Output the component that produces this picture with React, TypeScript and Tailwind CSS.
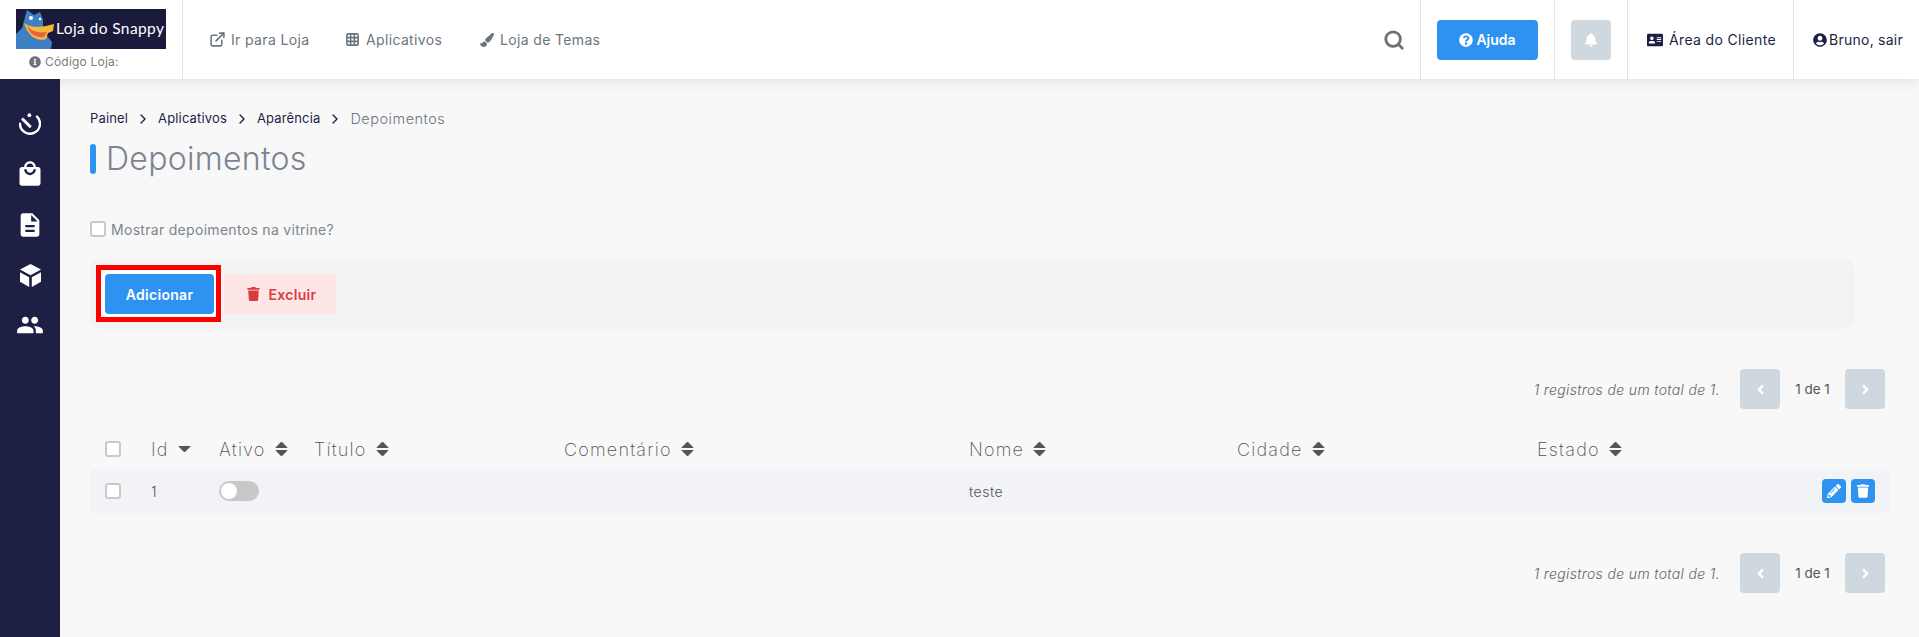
import React from 'react';
import { ChevronRight, ExternalLink, Grid3x3, Search } from 'lucide-react';
import {
  FaAddressCard,
  FaAngleLeft,
  FaAngleRight,
  FaBell,
  FaInfoCircle,
  FaPaintBrush,
  FaPencilAlt,
  FaQuestionCircle,
  FaTrash,
  FaUserCircle,
} from 'react-icons/fa';
import { MdDescription, MdLocalMall, MdPeople } from 'react-icons/md';

// ─── Header ─────────────────────────────────────────────────────────────────

const Logo = () => (
  <div className="relative w-[150px] h-10 bg-[#1a1a3c] flex items-center overflow-hidden">
    <svg viewBox="0 0 40 40" className="w-10 h-10 shrink-0">
      <path d="M0 40 L0 25 L6 19 L11 1 L18 6 L24 3 L27 11 L27 22 L36 33 L35 40 Z" fill="#3f7fc4" />
      <circle cx="15" cy="9" r="2" fill="#fff" />
      <circle cx="24" cy="10" r="1.3" fill="#fff" />
      <path d="M8 14 C14 19 24 18 30 17 L38 15 L37 22 L32 24 L30 30 C22 33 12 28 8 14 Z" fill="#f5b93a" />
      <path d="M11 17 C16 23 24 24 31 23 L28 28 C21 29 14 26 11 17 Z" fill="#e8603c" />
    </svg>
    <span className="font-['Lato',sans-serif] text-[15.5px] tracking-[0.4px] text-white whitespace-nowrap">Loja do Snappy</span>
  </div>
);

const NavLink: React.FC<{ icon: React.ReactNode; label: string; className: string }> = ({ icon, label, className }) => (
  <a className={`flex items-center text-[14px] tracking-[0.35px] text-[#6c757d] whitespace-nowrap ${className}`}>
    {icon}
    {label}
  </a>
);

const Header = () => (
  <header className="relative z-10 h-[79px] bg-white flex shadow-[0_2px_12px_rgba(0,0,0,0.1)]">
    <div className="w-[183px] shrink-0 border-r border-[#e4e4e4] pl-4 pt-[9px]">
      <Logo />
      <div className="flex items-center gap-[4px] pl-[13px] mt-[4px] text-[12px] tracking-[0.2px] leading-[18px] text-[#7c7c7c]">
        <FaInfoCircle className="w-3 h-3 text-[#6c757d]" />
        Código Loja:
      </div>
    </div>
    <nav className="flex items-center pl-[26px]">
      <NavLink icon={<ExternalLink className="w-[17px] h-[17px] mr-[5px]" strokeWidth={2.2} />} label="Ir para Loja" className="w-[136px]" />
      <NavLink icon={<Grid3x3 className="w-[15px] h-[15px] mr-[6px]" strokeWidth={2.5} />} label="Aplicativos" className="w-[135px]" />
      <NavLink icon={<FaPaintBrush className="w-[14px] h-[14px] mr-[6px]" />} label="Loja de Temas" className="" />
    </nav>
    <div className="ml-auto flex items-stretch">
      <div className="flex items-center pr-[15px]">
        <Search className="w-[22px] h-[22px] text-[#6f6f6f]" strokeWidth={3} />
      </div>
      <div className="w-[134px] border-l border-[#e4e4e4] flex items-center pl-4">
        <button className="w-[101px] h-10 rounded-[4px] bg-[#2e93f0] text-white text-[14px] font-semibold flex items-center justify-center gap-[3px]">
          <FaQuestionCircle className="w-[14px] h-[14px]" />
          Ajuda
        </button>
      </div>
      <div className="w-[73px] border-l border-[#e4e4e4] flex items-center pl-4">
        <button className="w-10 h-10 rounded-[4px] bg-[#cfd8df] flex items-center justify-center">
          <FaBell className="w-[14px] h-[14px] text-white" />
        </button>
      </div>
      <div className="w-[166px] border-l border-[#e4e4e4] flex items-center pl-[19px] gap-[6px] text-[14px] tracking-[0.35px] text-[#1e1f45] whitespace-nowrap">
        <FaAddressCard className="w-4 h-4" />
        Área do Cliente
      </div>
      <div className="w-[126px] border-l border-[#e4e4e4] flex items-center pl-[19px] gap-[2px] text-[14px] tracking-[0.25px] text-[#1e1f45] whitespace-nowrap">
        <FaUserCircle className="w-[14px] h-[14px]" />
        Bruno, sair
      </div>
    </div>
  </header>
);

// ─── Sidebar ────────────────────────────────────────────────────────────────

const TimerIcon = () => (
  <svg viewBox="0 0 22 22" className="w-[22px] h-[22px]" fill="none">
    <path d="M18 3.6 A10 10 0 1 1 1 10.7" stroke="currentColor" strokeWidth="2.4" strokeLinecap="round" />
    <path d="M2 6.5 L4 4.6 L12.2 12.4 A1.6 1.6 0 0 1 10 14.6 Z" fill="currentColor" />
    <circle cx="10.4" cy="2.2" r="1.9" fill="currentColor" />
  </svg>
);

const CubeIcon = () => (
  <svg viewBox="0 0 64 70" className="w-[21px] h-[23px]" fill="currentColor">
    <path d="M32 0 L64 17 L32 34 L0 17 Z" />
    <path d="M0 25 L28 40 L28 70 L0 54 Z" />
    <path d="M64 25 L36 40 L36 70 L64 54 Z" />
  </svg>
);

const Sidebar = () => (
  <aside className="w-[60px] shrink-0 bg-[#1e1f45] flex flex-col items-center pt-[34px] text-white">
    <div className="h-[49px] flex justify-center"><TimerIcon /></div>
    <div className="h-[51px] flex justify-center -mt-[2px]"><MdLocalMall className="w-7 h-7" /></div>
    <div className="h-[51px] flex justify-center"><MdDescription className="w-7 h-7" /></div>
    <div className="h-[50px] flex justify-center pt-[2px]"><CubeIcon /></div>
    <div className="h-[50px] flex justify-center -mt-[1px]"><MdPeople className="w-7 h-7" /></div>
  </aside>
);

// ─── Table pieces ───────────────────────────────────────────────────────────

const columns = 'grid grid-cols-[61px_68px_95px_250px_405px_268px_300px_1fr] items-center';

const Checkbox: React.FC<{ className?: string }> = ({ className = '' }) => (
  <span className={`block w-4 h-4 rounded-[3px] border-2 border-[#c9c9c9] bg-white ${className}`} />
);

const SortIcon: React.FC<{ sorted?: boolean }> = ({ sorted }) => (
  <svg viewBox="0 0 13 16" className="w-[13px] h-4 text-[#555]" fill="currentColor" stroke="currentColor" strokeWidth="1" strokeLinejoin="round">
    {!sorted && <path d="M6.5 1 L12 6.5 H1 Z" />}
    <path d="M1 9.5 H12 L6.5 15 Z" transform={sorted ? 'translate(0 -4)' : undefined} />
  </svg>
);

const HeadCell: React.FC<{ label: string; sorted?: boolean }> = ({ label, sorted }) => (
  <div className="flex items-center gap-[9px] text-[18px] tracking-[1.2px] font-extralight text-[#4f5359]">
    {label}
    <SortIcon sorted={sorted} />
  </div>
);

const Pagination: React.FC<{ className?: string }> = ({ className = '' }) => (
  <div className={`flex items-center justify-end pr-[34px] h-10 ${className}`}>
    <span className="italic text-[14px] tracking-[0.35px] font-light text-[#666] mr-[20px]">1 registros de um total de 1.</span>
    <button className="w-10 h-10 rounded-[4px] bg-[#cfd8df] flex items-center justify-center text-white">
      <FaAngleLeft className="w-[15px] h-[15px]" />
    </button>
    <span className="w-[65px] text-center text-[13.5px] text-[#555]">1 de 1</span>
    <button className="w-10 h-10 rounded-[4px] bg-[#cfd8df] flex items-center justify-center text-white">
      <FaAngleRight className="w-[15px] h-[15px]" />
    </button>
  </div>
);

// ─── Main Page ──────────────────────────────────────────────────────────────

export default function App() {
  return (
    <div className="w-[1919px] h-[637px] overflow-hidden flex flex-col bg-[#f8f8f8] font-['Inter',sans-serif]">
      <Header />
      <div className="flex flex-1 min-h-0">
        <Sidebar />
        <main className="flex-1 pl-[30px] pt-[30px]">
          <div className="flex items-center h-5 text-[13px] tracking-[0.15px] text-[#1e1f45]">
            <span>Painel</span>
            <ChevronRight className="w-4 h-4 mx-[7px]" />
            <span>Aplicativos</span>
            <ChevronRight className="w-4 h-4 mx-[7px]" />
            <span>Aparência</span>
            <ChevronRight className="w-4 h-4 mx-[7px]" />
            <span className="text-[14.5px] tracking-[0.5px] font-light text-[#6c757d]">Depoimentos</span>
          </div>

          <div className="flex items-center mt-[15px] h-[30px]">
            <span className="w-[6px] h-[30px] rounded-full bg-[#2e93f0]" />
            <h1 className="ml-[10px] text-[32px] tracking-[0.3px] font-light text-[#7b8590]">Depoimentos</h1>
          </div>

          <label className="flex items-center gap-[5px] mt-[45px] h-5 text-[14px] tracking-[0.3px] text-[#7b8590]">
            <Checkbox />
            Mostrar depoimentos na vitrine?
          </label>

          <div className="mt-5 mr-[64px] h-[70px] rounded-[10px] bg-[#f2f3f3] pl-[6px] pt-[6px] flex items-start">
            <div className="border-[5px] border-[#ff0000] bg-white pl-1 pr-[2px] pt-1 pb-[3px]">
              <button className="block w-[109px] h-10 rounded-[4px] bg-[#2e93f0] text-white text-[14px] tracking-[0.3px] font-semibold">Adicionar</button>
            </div>
            <button className="ml-[3px] mt-[9px] w-[112px] h-10 pl-[3px] rounded-[4px] bg-[#fee5e5] text-[#d93c3c] text-[14px] tracking-[0.3px] font-semibold flex items-center justify-center gap-[9px]">
              <FaTrash className="w-[13px] h-[14px]" />
              Excluir
            </button>
          </div>

          <Pagination className="mt-10" />

          <div className="mt-5 mr-[29px]">
            <div className={`${columns} h-10`}>
              <div className="pl-[15px]"><Checkbox /></div>
              <HeadCell label="Id" sorted />
              <HeadCell label="Ativo" />
              <HeadCell label="Título" />
              <HeadCell label="Comentário" />
              <HeadCell label="Nome" />
              <HeadCell label="Cidade" />
              <HeadCell label="Estado" />
            </div>
            <div className={`${columns} h-11 rounded-[6px] bg-[#f1f3f7] text-[14px] tracking-[0.5px] font-light text-[#555]`}>
              <div className="pl-[15px]"><Checkbox /></div>
              <div>1</div>
              <div>
                <span className="block w-10 h-5 rounded-full bg-[#c8c8c8] p-[2px]">
                  <span className="block w-4 h-4 rounded-full bg-white" />
                </span>
              </div>
              <div />
              <div />
              <div>teste</div>
              <div />
              <div className="flex justify-end gap-[5px] pr-[15px]">
                <button className="w-6 h-6 rounded-[4px] bg-[#2e93f0] flex items-center justify-center text-white">
                  <FaPencilAlt className="w-[14px] h-[14px]" />
                </button>
                <button className="w-6 h-6 rounded-[4px] bg-[#2e93f0] flex items-center justify-center text-white">
                  <FaTrash className="w-3 h-[14px]" />
                </button>
              </div>
            </div>
          </div>

          <Pagination className="mt-10" />
        </main>
      </div>
    </div>
  );
}
